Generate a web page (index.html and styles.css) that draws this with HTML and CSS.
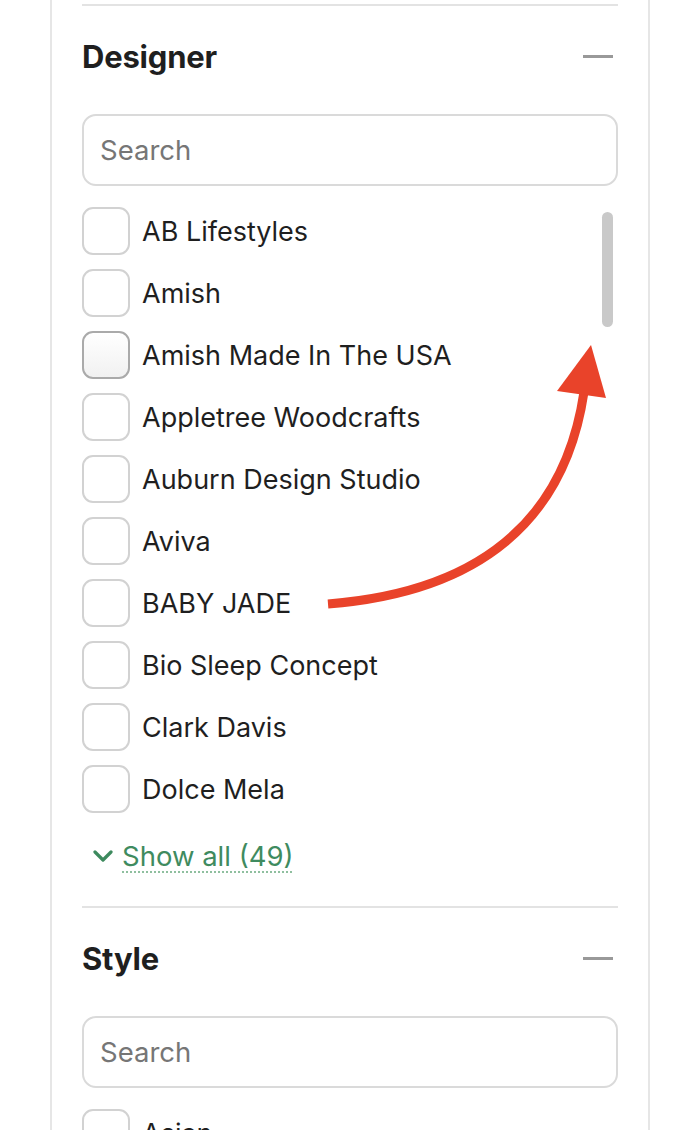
FILE: index.html
```html
<!DOCTYPE html>
<html>
<head>
<meta charset="utf-8">
<link rel="stylesheet" href="styles.css">
</head>
<body>
<div class="panel">
  <div class="divider"></div>
  <section class="facet">
    <div class="facet-head">
      <h2>Designer</h2>
      <span class="minus"></span>
    </div>
    <div class="search">Search</div>
    <div class="list">
      <div class="row"><span class="box"></span><span class="label">AB Lifestyles</span></div>
      <div class="row"><span class="box"></span><span class="label">Amish</span></div>
      <div class="row"><span class="box hover"></span><span class="label">Amish Made In The USA</span></div>
      <div class="row"><span class="box"></span><span class="label">Appletree Woodcrafts</span></div>
      <div class="row"><span class="box"></span><span class="label">Auburn Design Studio</span></div>
      <div class="row"><span class="box"></span><span class="label">Aviva</span></div>
      <div class="row"><span class="box"></span><span class="label">BABY JADE</span></div>
      <div class="row"><span class="box"></span><span class="label">Bio Sleep Concept</span></div>
      <div class="row"><span class="box"></span><span class="label">Clark Davis</span></div>
      <div class="row"><span class="box"></span><span class="label">Dolce Mela</span></div>
      <span class="thumb"></span>
    </div>
    <div class="show-all">
      <svg class="chev" width="20" height="14" viewBox="0 0 20 14"><path d="M2 3 L10 11 L18 3" fill="none" stroke="#3d8a5e" stroke-width="3.2" stroke-linecap="round" stroke-linejoin="round"/></svg>
      <span class="show-text">Show all (49)</span>
    </div>
  </section>
  <div class="divider"></div>
  <section class="facet">
    <div class="facet-head">
      <h2>Style</h2>
      <span class="minus"></span>
    </div>
    <div class="search">Search</div>
    <div class="list">
      <div class="row"><span class="box"></span><span class="label">Asian</span></div>
    </div>
  </section>
  <svg class="arrow" width="698" height="1130" viewBox="0 0 698 1130">
    <path d="M328 604 C 480 592 565 520 584 392" fill="none" stroke="#e9432a" stroke-width="9"/>
    <polygon points="591,345 557,391 606,398" fill="#e9432a"/>
  </svg>
</div>
</body>
</html>
```
FILE: styles.css
```css
html, body {
  margin: 0;
  padding: 0;
  background: #fff;
  height: 1130px;
  overflow: hidden;
}
body {
  font-family: "Inter", "Roboto", "Liberation Sans", sans-serif;
  color: #222;
}
.panel {
  margin: 0 48px 0 50px;
  border-left: 2px solid #e6e6e6;
  border-right: 2px solid #e6e6e6;
  padding: 4px 30px 0;
  height: 1130px;
  box-sizing: border-box;
  overflow: hidden;
}
.divider {
  height: 2px;
  background: #e3e3e3;
}
.facet-head {
  height: 100px;
  display: flex;
  align-items: center;
  justify-content: space-between;
}
.facet-head h2 {
  margin: 0;
  font-size: 31px;
  font-weight: 700;
  color: #1f1f1f;
  letter-spacing: -0.2px;
}
.minus {
  width: 30px;
  height: 3px;
  background: #999;
  margin-right: 5px;
}
.search {
  margin-top: 8px;
  height: 72px;
  box-sizing: border-box;
  border: 2px solid #dadada;
  border-radius: 14px;
  padding-left: 16px;
  display: flex;
  align-items: center;
  font-size: 27.5px;
  color: #767676;
}
.list {
  position: relative;
  margin-top: 14px;
}
.row {
  height: 62px;
  display: flex;
  align-items: center;
  gap: 12px;
}
.box {
  width: 48px;
  height: 48px;
  box-sizing: border-box;
  border: 2px solid #d2d2d2;
  border-radius: 11px;
  background: #fff;
  flex: none;
}
.box.hover {
  border-color: #aaa;
  background: linear-gradient(#fff, #f1f1f1);
}
.label {
  font-size: 27px;
  color: #1f1f1f;
}
.thumb {
  position: absolute;
  right: 5px;
  top: 12px;
  width: 11px;
  height: 115px;
  border-radius: 6px;
  background: #c9c9c9;
}
.show-all {
  height: 72px;
  margin-bottom: 14px;
  display: flex;
  align-items: center;
  padding-left: 11px;
  gap: 9px;
}
.chev {
  flex: none;
}
.show-text {
  font-size: 27.5px;
  color: #3f8b5f;
  text-decoration: underline dotted #8fbf9f;
  text-decoration-thickness: 2px;
  text-underline-offset: 5px;
}
.arrow {
  position: absolute;
  left: 0;
  top: 0;
  pointer-events: none;
}
```
